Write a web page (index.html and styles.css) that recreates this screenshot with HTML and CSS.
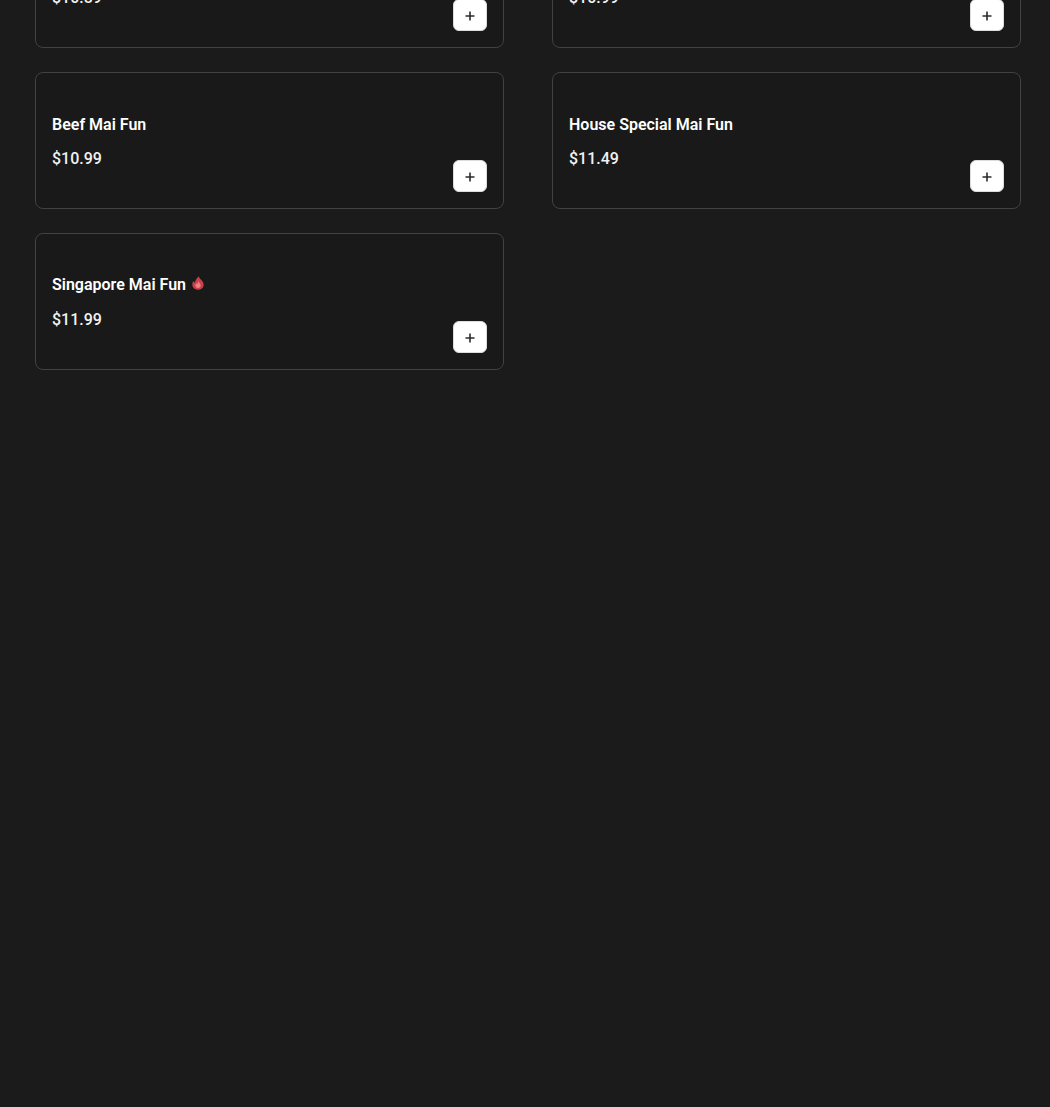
FILE: index.html
```html
<!DOCTYPE html>
<html lang="en">
<head>
    <meta charset="UTF-8">
    <meta name="viewport" content="width=device-width, initial-scale=1.0">
    <title>Mai Fun - Menu</title>
    <link rel="stylesheet" href="styles.css">
</head>
<body>
    <div class="menu-grid">
        <div class="menu-card">
            <div class="item-name">Chicken Mai Fun</div>
            <div class="item-price">$10.89</div>
            <button class="add-button" aria-label="Add"><svg viewBox="0 0 10 10" class="plus-icon"><path d="M5 .5v9M.5 5h9"/></svg></button>
        </div>
        <div class="menu-card">
            <div class="item-name">Shrimp Mai Fun</div>
            <div class="item-price">$10.99</div>
            <button class="add-button" aria-label="Add"><svg viewBox="0 0 10 10" class="plus-icon"><path d="M5 .5v9M.5 5h9"/></svg></button>
        </div>
        <div class="menu-card">
            <div class="item-name">Beef Mai Fun</div>
            <div class="item-price">$10.99</div>
            <button class="add-button" aria-label="Add"><svg viewBox="0 0 10 10" class="plus-icon"><path d="M5 .5v9M.5 5h9"/></svg></button>
        </div>
        <div class="menu-card">
            <div class="item-name">House Special Mai Fun</div>
            <div class="item-price">$11.49</div>
            <button class="add-button" aria-label="Add"><svg viewBox="0 0 10 10" class="plus-icon"><path d="M5 .5v9M.5 5h9"/></svg></button>
        </div>
        <div class="menu-card">
            <div class="item-name item-name-spicy">Singapore Mai Fun
                <svg viewBox="0 0 14 14" class="spicy-icon"><path class="flame-outer" d="M7.800.3c.3 2 1.700 2.800 3.200 4.500 1.700 1.900 2.200 4.300 1.100 6.200-1 1.800-3 2.800-5.100 2.700-2.200 0-4.300-1.100-5.200-3C.9 8.800 1.300 6.700 2.500 5c.2.900.7 1.500 1.400 1.800C4.200 4.400 5.800 2 7.800.3z"/><path class="flame-inner" d="M7.500 5.300c.2 1.300 1.700 2 2.100 3.500.4 1.700-.9 3.300-2.600 3.300-1.600 0-2.800-1.400-2.600-3 .1-.8.500-1.400 1.200-1.900.1.500.3.900.7 1.200.1-1.100.5-2.300 1.200-3.100z"/></svg>
            </div>
            <div class="item-price">$11.99</div>
            <button class="add-button" aria-label="Add"><svg viewBox="0 0 10 10" class="plus-icon"><path d="M5 .5v9M.5 5h9"/></svg></button>
        </div>
    </div>
</body>
</html>
```
FILE: styles.css
```css
* {
    margin: 0;
    padding: 0;
    box-sizing: border-box;
}

html,
body {
    height: 100%;
    overflow: hidden;
}

body {
    background-color: #1b1b1b;
    font-family: Roboto, "Liberation Sans", sans-serif;
    color: #fff;
}

.menu-grid {
    display: grid;
    grid-template-columns: 469px 469px;
    column-gap: 48px;
    row-gap: 24px;
    margin-top: -89px;
    padding-left: 35px;
}

.menu-card {
    position: relative;
    height: 137px;
    padding: 41px 16px 0;
    background-color: #191919;
    border: 1px solid #424242;
    border-radius: 8px;
}

.item-name {
    display: flex;
    align-items: center;
    gap: 5px;
    height: 21px;
    font-size: 16px;
    font-weight: 600;
    line-height: 21px;
}

.item-name-spicy {
    align-items: flex-start;
    line-height: 19px;
}

.item-price {
    margin-top: 13px;
    font-size: 16px;
    font-weight: 500;
    line-height: 21px;
    color: #f2f2f2;
}

.add-button {
    position: absolute;
    right: 16px;
    bottom: 16px;
    display: flex;
    align-items: center;
    justify-content: center;
    width: 34px;
    height: 32px;
    padding-top: 1px;
    background-color: #fff;
    border: 1px solid #dcdcdc;
    border-radius: 6px;
    cursor: pointer;
}

.plus-icon {
    width: 10px;
    height: 10px;
    fill: none;
    stroke: #2b2b2b;
    stroke-width: 1.6;
}

.spicy-icon {
    width: 14px;
    height: 14px;
    margin-top: 1px;
}

.flame-outer {
    fill: #c9404a;
}

.flame-inner {
    fill: #ee7f84;
}
```
